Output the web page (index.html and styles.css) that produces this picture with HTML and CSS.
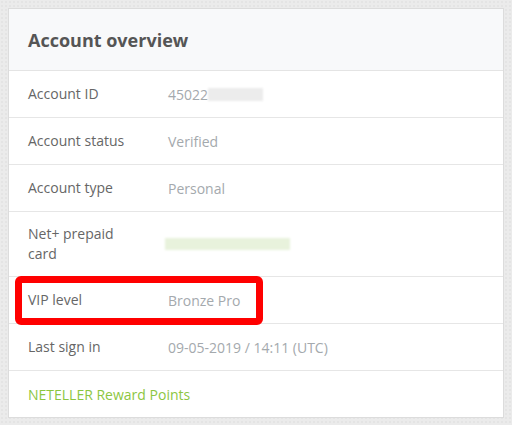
FILE: index.html
```html
<!DOCTYPE html>
<html>
<head>
  <meta charset="UTF-8">
  <title>Account overview</title>
  <link rel="stylesheet" href="styles.css">
</head>
<body>
  <div class="card">
    <div class="card-header">
      <h2 class="card-title">Account overview</h2>
    </div>
    <div class="row">
      <div class="label">Account ID</div>
      <div class="value">45022<span class="masked masked-id"></span></div>
    </div>
    <div class="row">
      <div class="label">Account status</div>
      <div class="value">Verified</div>
    </div>
    <div class="row">
      <div class="label">Account type</div>
      <div class="value">Personal</div>
    </div>
    <div class="row">
      <div class="label">Net+ prepaid card</div>
      <div class="value"><span class="masked masked-card"></span></div>
    </div>
    <div class="row row-vip">
      <div class="label">VIP level</div>
      <div class="value">Bronze Pro</div>
      <div class="highlight"></div>
    </div>
    <div class="row">
      <div class="label">Last sign in</div>
      <div class="value">09-05-2019 / 14:11 (UTC)</div>
    </div>
    <div class="row">
      <a class="link" href="#">NETELLER Reward Points</a>
    </div>
  </div>
</body>
</html>
```

FILE: styles.css
```css
body {
  margin: 0;
  padding: 8px 8px 7px 8px;
  font-family: 'Open Sans', 'Liberation Sans', sans-serif;
  background-color: #ebebeb;
  background-image: radial-gradient(#e4e4e4 1px, transparent 1px);
  background-size: 4px 4px;
}
.card {
  width: 494px;
  background-color: #fff;
  border: 1px solid #dcdcdc;
}
.card-header {
  height: 61px;
  display: flex;
  align-items: center;
  padding: 0 19px;
  background-color: #f8f9fa;
  border-bottom: 1px solid #e4e4e4;
}
.card-title {
  margin: 0;
  font-size: 18px;
  font-weight: 700;
  color: #555;
}
.row {
  position: relative;
  display: flex;
  align-items: center;
  min-height: 46px;
  padding: 0 19px;
  border-bottom: 1px solid #e6e6e6;
  font-size: 14px;
}
.row:last-child {
  border-bottom: none;
}
.label {
  width: 106px;
  margin-right: 34px;
  padding: 12px 0;
  line-height: 20px;
  color: #666;
}
.value {
  display: flex;
  align-items: center;
  color: #a4a9ad;
}
.masked {
  display: inline-block;
  filter: blur(1px);
}
.masked-id {
  width: 55px;
  height: 13px;
  background-color: #ececec;
}
.masked-card {
  width: 125px;
  height: 12px;
  margin-left: -3px;
  background-color: #e8f2dc;
}
.link {
  color: #8cc63f;
  text-decoration: none;
}
.highlight {
  position: absolute;
  left: 6px;
  top: -1px;
  width: 234px;
  height: 35px;
  border: 7px solid #ff0000;
  border-radius: 6px;
}
```
